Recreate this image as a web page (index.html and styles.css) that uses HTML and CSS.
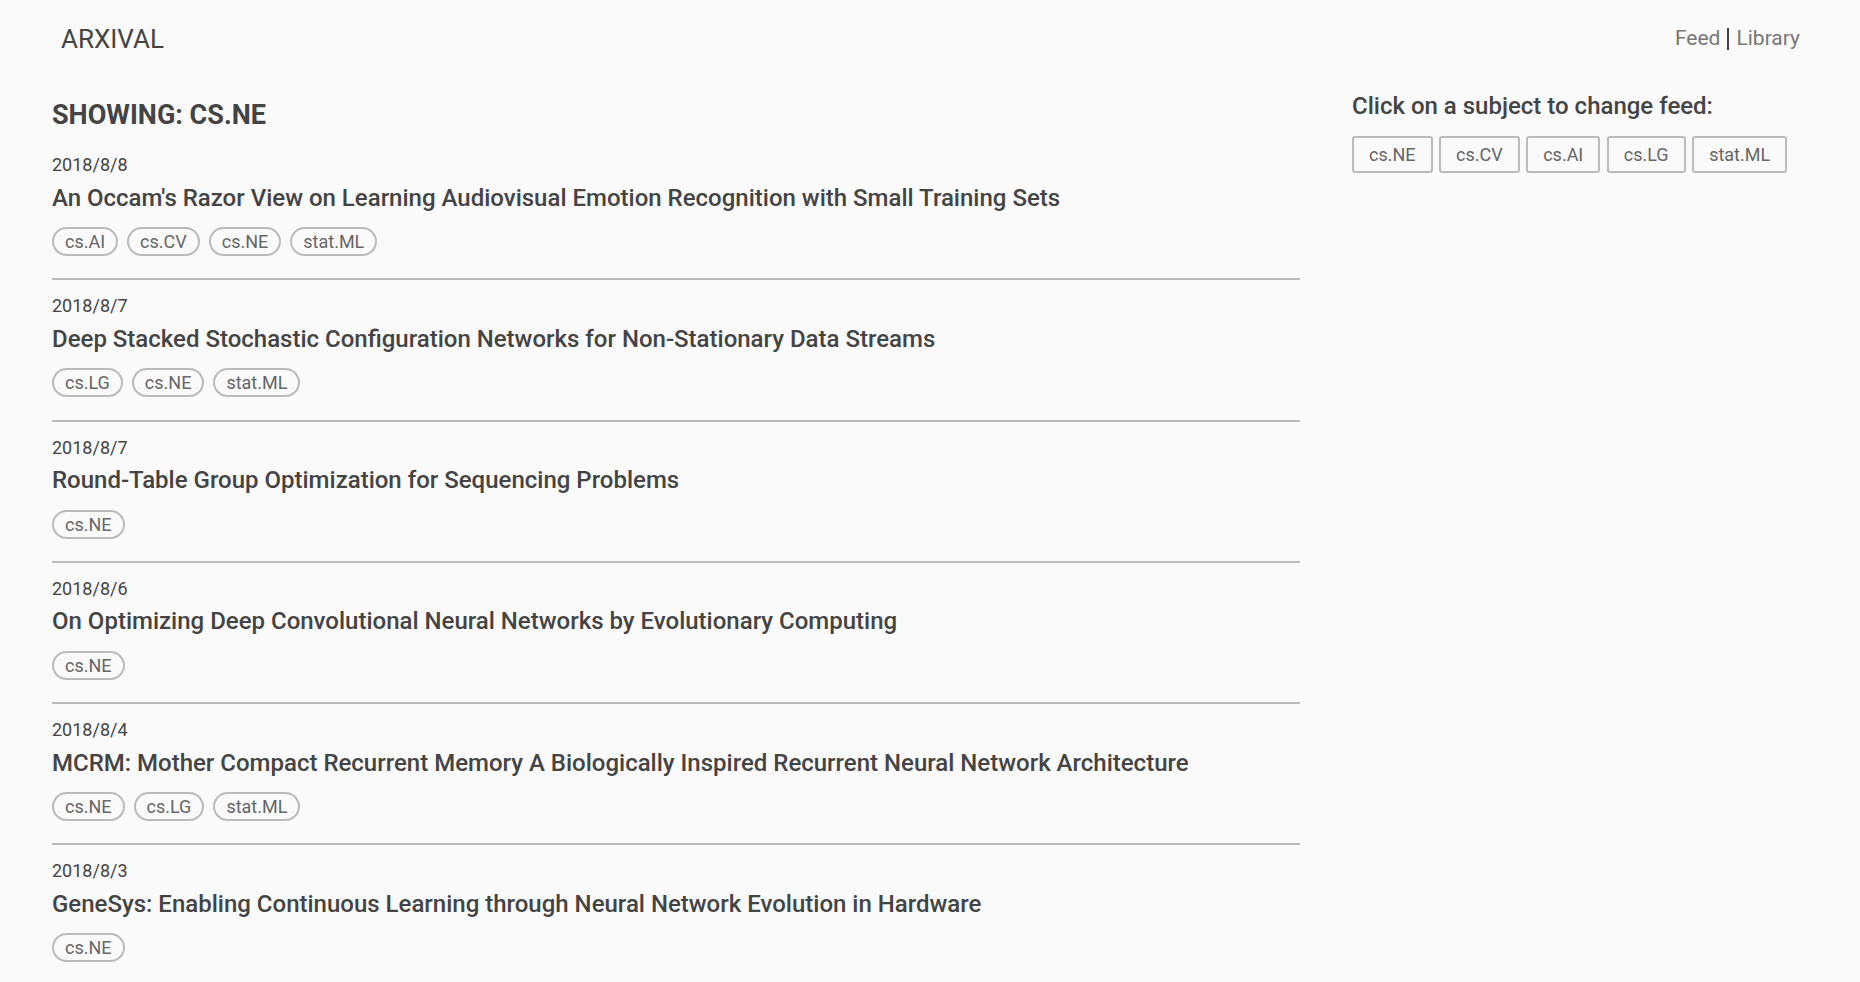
FILE: index.html
```html
<!DOCTYPE html>
<html lang="en">
<head>
<meta charset="utf-8">
<title>ARXIVAL</title>
<link rel="stylesheet" href="styles.css">
</head>
<body>
<header class="topbar">
  <div class="brand">ARXIVAL</div>
  <nav class="nav">
    <a class="nav-link" href="#">Feed</a><span class="nav-sep"></span><a class="nav-link" href="#">Library</a>
  </nav>
</header>
<div class="layout">
  <main class="feed">
    <h1 class="feed-title">SHOWING: CS.NE</h1>
    <ul class="papers">
      <li class="paper">
        <div class="paper-date">2018/8/8</div>
        <div class="paper-title">An Occam's Razor View on Learning Audiovisual Emotion Recognition with Small Training Sets</div>
        <div class="tags"><span class="tag">cs.AI</span><span class="tag">cs.CV</span><span class="tag">cs.NE</span><span class="tag">stat.ML</span></div>
      </li>
      <li class="paper">
        <div class="paper-date">2018/8/7</div>
        <div class="paper-title">Deep Stacked Stochastic Configuration Networks for Non-Stationary Data Streams</div>
        <div class="tags"><span class="tag">cs.LG</span><span class="tag">cs.NE</span><span class="tag">stat.ML</span></div>
      </li>
      <li class="paper">
        <div class="paper-date">2018/8/7</div>
        <div class="paper-title">Round-Table Group Optimization for Sequencing Problems</div>
        <div class="tags"><span class="tag">cs.NE</span></div>
      </li>
      <li class="paper">
        <div class="paper-date">2018/8/6</div>
        <div class="paper-title">On Optimizing Deep Convolutional Neural Networks by Evolutionary Computing</div>
        <div class="tags"><span class="tag">cs.NE</span></div>
      </li>
      <li class="paper">
        <div class="paper-date">2018/8/4</div>
        <div class="paper-title">MCRM: Mother Compact Recurrent Memory A Biologically Inspired Recurrent Neural Network Architecture</div>
        <div class="tags"><span class="tag">cs.NE</span><span class="tag">cs.LG</span><span class="tag">stat.ML</span></div>
      </li>
      <li class="paper">
        <div class="paper-date">2018/8/3</div>
        <div class="paper-title">GeneSys: Enabling Continuous Learning through Neural Network Evolution in Hardware</div>
        <div class="tags"><span class="tag">cs.NE</span></div>
      </li>
    </ul>
  </main>
  <aside class="sidebar">
    <h2 class="sidebar-title">Click on a subject to change feed:</h2>
    <div class="subjects">
      <button class="subject">cs.NE</button>
      <button class="subject">cs.CV</button>
      <button class="subject">cs.AI</button>
      <button class="subject">cs.LG</button>
      <button class="subject">stat.ML</button>
    </div>
  </aside>
</div>
</body>
</html>
```
FILE: styles.css
```css
html, body {
  margin: 0;
  padding: 0;
  background: #fafafa;
}
body {
  font-family: Roboto, "Liberation Sans", Arial, sans-serif;
  color: #444;
  height: 982px;
  overflow: hidden;
}
.topbar {
  display: flex;
  justify-content: space-between;
  align-items: flex-start;
  padding: 0 60px 0 61px;
  height: 54px;
}
.brand {
  font-size: 26px;
  line-height: 32px;
  margin-top: 23px;
  color: #444;
  font-weight: 400;
}
.nav {
  display: flex;
  align-items: flex-start;
  margin-top: 27px;
}
.nav-link {
  font-size: 21px;
  line-height: 22px;
  color: #777;
  text-decoration: none;
}
.nav-sep {
  display: inline-block;
  width: 2px;
  height: 22px;
  background: #444;
  margin: 1px 7px 0 7px;
}
.layout {
  display: flex;
  padding-left: 52px;
  gap: 52px;
}
.feed {
  width: 1248px;
  flex: none;
}
.feed-title {
  margin: 45px 0 8px;
  font-size: 27px;
  line-height: 32px;
  font-weight: 700;
  color: #444;
}
.papers {
  list-style: none;
  margin: 0;
  padding: 0;
}
.paper {
  padding: 14px 0 22.25px;
  border-bottom: 2px solid #bbb;
}
.paper-date {
  font-size: 18px;
  line-height: 24px;
  color: #444;
}
.paper-title {
  font-size: 24px;
  line-height: 30px;
  font-weight: 500;
  color: #444;
  margin-top: 5.5px;
}
.tags {
  display: flex;
  gap: 9px;
  margin-top: 14.5px;
}
.tag {
  border: 2px solid #bbb;
  border-radius: 999px;
  padding: 3px 11px;
  font-size: 18px;
  line-height: 19px;
  color: #666;
}
.sidebar {
  flex: 1;
}
.sidebar-title {
  margin: 37px 0 15px;
  font-size: 24px;
  line-height: 30px;
  font-weight: 500;
  color: #444;
}
.subjects {
  display: flex;
  gap: 6.5px;
}
.subject {
  font-family: inherit;
  background: transparent;
  border: 2px solid #bbb;
  border-radius: 3px;
  height: 37px;
  margin: 0;
  padding: 0 15px;
  font-size: 18px;
  color: #666;
}
```
